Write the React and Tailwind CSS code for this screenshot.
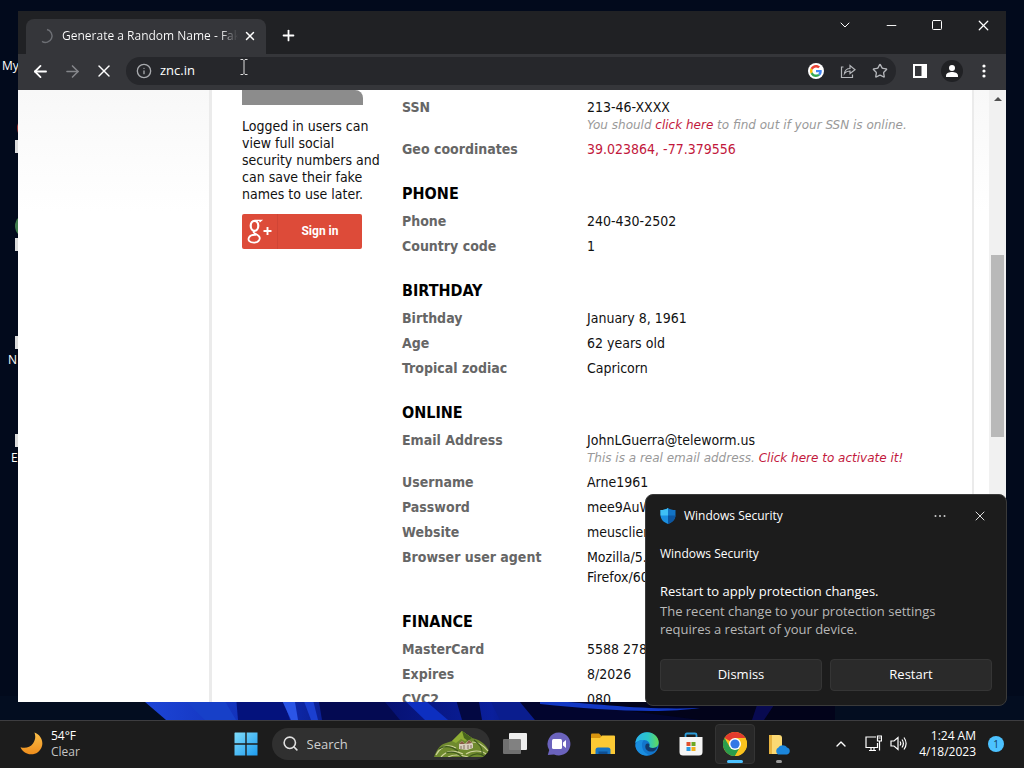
import {
  ArrowLeft,
  ArrowRight,
  ChevronDown,
  ChevronUp,
  Info,
  Minus,
  Plus,
  Search,
  Square,
  Star,
  X,
} from 'lucide-react';

const sections = [
  {
    rows: [
      {
        label: 'SSN',
        value: '213-46-XXXX',
        note: (
          <>
            You should <a href="#ssn" className="text-[#c2183c]">click here</a> to find out if your SSN is online.
          </>
        ),
      },
      { label: 'Geo coordinates', value: <a href="#map" className="text-[#c2183c]">39.023864, -77.379556</a> },
    ],
  },
  {
    title: 'PHONE',
    rows: [
      { label: 'Phone', value: '240-430-2502' },
      { label: 'Country code', value: '1' },
    ],
  },
  {
    title: 'BIRTHDAY',
    rows: [
      { label: 'Birthday', value: 'January 8, 1961' },
      { label: 'Age', value: '62 years old' },
      { label: 'Tropical zodiac', value: 'Capricorn' },
    ],
  },
  {
    title: 'ONLINE',
    rows: [
      {
        label: 'Email Address',
        value: 'JohnLGuerra@teleworm.us',
        note: (
          <>
            This is a real email address. <a href="#activate" className="text-[#c2183c]">Click here to activate it!</a>
          </>
        ),
      },
      { label: 'Username', value: 'Arne1961' },
      { label: 'Password', value: 'mee9AuW' },
      { label: 'Website', value: 'meusclien' },
      { label: 'Browser user agent', value: <>Mozilla/5.0<br />Firefox/60</> },
    ],
  },
  {
    title: 'FINANCE',
    rows: [
      { label: 'MasterCard', value: '5588 278' },
      { label: 'Expires', value: '8/2026' },
      { label: 'CVC2', value: '080' },
    ],
  },
];

function Wallpaper() {
  return (
    <svg className="absolute bottom-0 left-0 w-full h-6" viewBox="0 0 1024 24" preserveAspectRatio="none">
      <defs>
        <linearGradient id="bloom" x1="0" x2="1">
          <stop offset="0" stopColor="#1d46d8" />
          <stop offset="0.3" stopColor="#0f2bb0" />
          <stop offset="0.5" stopColor="#06106e" />
          <stop offset="0.75" stopColor="#0a1f9c" />
          <stop offset="1" stopColor="#02041c" />
        </linearGradient>
      </defs>
      <rect width="1024" height="24" fill="#030d20" />
      <path d="M138 0H835V24H166Z" fill="#02031a" />
      <path d="M138 0H600L610 24H166Z" fill="url(#bloom)" />
      <path d="M180 0L205 24H236L222 0Z" fill="#1740c8" />
      <path d="M236 0L238 24H290L282 0Z" fill="#04127c" />
      <path d="M280 0L291 24H298L294 0Z" fill="#2b55e6" />
      <path d="M302 0L311 24H318L312 0Z" fill="#1b3fd0" />
      <path d="M318 0L322 24H400L380 0Z" fill="#040a52" />
      <path d="M400 0L425 24H448L420 0Z" fill="#0d2fc0" />
      <path d="M455 0L462 24H482L478 0Z" fill="#030842" />
      <path d="M488 0L500 24H535L515 0Z" fill="#0a1d8e" />
      <path d="M515 0L535 24H700L560 6Z" fill="#02052e" />
      <path d="M540 4C600 8 640 14 700 12C660 18 600 14 540 8Z" fill="#1238c4" />
      <path d="M760 0L752 24H764L780 0Z" fill="#080a50" />
    </svg>
  );
}

function GoogleG() {
  return (
    <svg className="size-4" viewBox="0 0 48 48">
      <circle cx="24" cy="24" r="24" fill="#fff" />
      <g transform="translate(6 6) scale(.75)">
        <path fill="#EA4335" d="M24 9.5c3.54 0 6.71 1.22 9.21 3.6l6.85-6.85C35.9 2.38 30.47 0 24 0 14.62 0 6.51 5.38 2.56 13.22l7.98 6.19C12.43 13.72 17.74 9.5 24 9.5z" />
        <path fill="#4285F4" d="M46.98 24.55c0-1.57-.15-3.09-.38-4.55H24v9.02h12.94c-.58 2.96-2.26 5.48-4.78 7.18l7.73 6c4.51-4.18 7.09-10.36 7.09-17.65z" />
        <path fill="#FBBC05" d="M10.53 28.59c-.48-1.45-.76-2.99-.76-4.59s.27-3.14.76-4.59l-7.98-6.19C.92 16.46 0 20.12 0 24c0 3.88.92 7.54 2.56 10.78l7.97-6.19z" />
        <path fill="#34A853" d="M24 48c6.48 0 11.93-2.13 15.89-5.81l-7.73-6c-2.15 1.45-4.92 2.3-8.16 2.3-6.26 0-11.57-4.22-13.47-9.91l-7.98 6.19C6.51 42.62 14.62 48 24 48z" />
      </g>
    </svg>
  );
}

function TabStrip() {
  return (
    <div className="flex h-[43px] shrink-0 items-stretch bg-[#202124]">
      <div className="flex flex-1 items-end pl-2">
        <div className="flex h-[35px] w-60 items-center rounded-t-lg bg-[#35363a] pb-0.5 pl-3 pr-2">
          <svg className="size-4 shrink-0" viewBox="0 0 16 16" fill="none" stroke="#6d6f74" strokeWidth="1.5">
            <path d="M9 1.6A6.5 6.5 0 1 1 4 13.4" />
          </svg>
          <span className="ml-2 w-[176px] shrink-0 overflow-hidden whitespace-nowrap bg-linear-to-r from-white from-90% to-[#35363a] bg-clip-text text-[12px] text-transparent">
            Generate a Random Name - Fake
          </span>
          <button aria-label="Close tab" className="ml-1 flex size-4 items-center justify-center text-white">
            <X size={14} strokeWidth={2.5} />
          </button>
        </div>
        <button aria-label="New tab" className="ml-2 flex h-[35px] w-7 items-center justify-center pb-0.5 text-white">
          <Plus size={17} strokeWidth={2.5} />
        </button>
      </div>
      <div className="flex h-7 text-white">
        <button aria-label="Search tabs" className="flex w-[46px] items-center justify-center"><ChevronDown size={16} strokeWidth={1.5} /></button>
        <button aria-label="Minimize" className="flex w-[46px] items-center justify-center"><Minus size={15} strokeWidth={1.5} /></button>
        <button aria-label="Maximize" className="flex w-[46px] items-center justify-center"><Square size={12} strokeWidth={2} /></button>
        <button aria-label="Close" className="flex w-[46px] items-center justify-center"><X size={17} strokeWidth={1.75} /></button>
      </div>
    </div>
  );
}

function Toolbar() {
  return (
    <div className="flex h-9 shrink-0 items-center bg-[#35363a] px-1.5 pb-0.5 text-white">
      <button aria-label="Back" className="flex w-8 justify-center"><ArrowLeft size={19} strokeWidth={2.25} /></button>
      <button aria-label="Forward" className="flex w-8 justify-center text-[#85868a]"><ArrowRight size={19} strokeWidth={2} /></button>
      <button aria-label="Stop" className="flex w-8 justify-center"><X size={20} strokeWidth={1.75} /></button>
      <div className="ml-1.5 flex h-7 flex-1 items-center rounded-full bg-[#26272b] pl-2.5 pr-2">
        <Info size={16} strokeWidth={2} className="shrink-0 text-[#a8aaae]" />
        <input
          aria-label="Address"
          defaultValue="znc.in"
          className="ml-2 w-full min-w-0 flex-1 bg-transparent text-[13px] text-white outline-none"
        />
        <div className="flex items-center gap-4 text-[#b4b6ba]">
          <button aria-label="Google"><GoogleG /></button>
          <button aria-label="Share">
            <svg className="size-4" viewBox="0 0 16 16" fill="none" stroke="currentColor" strokeWidth="1.2">
              <path d="M3.500 4H1.500V14.500H12.500V11.500" />
              <path d="M4.500 10.500C5 7 7.500 5.500 10 5.500V2.500L15 6.700L10 10.500V8C7.500 8 5.800 8.800 4.500 10.500Z" />
            </svg>
          </button>
          <button aria-label="Bookmark"><Star size={16} strokeWidth={2} /></button>
        </div>
      </div>
      <button aria-label="Side panel" className="ml-2 flex w-8 justify-center">
        <svg className="size-4" viewBox="0 0 16 16">
          <path fill="currentColor" fillRule="evenodd" d="M1 1H15V15H1ZM3 3V13H9.500V3Z" />
        </svg>
      </button>
      <button aria-label="Profile" className="flex w-8 justify-center">
        <svg className="size-[22px]" viewBox="0 0 22 22">
          <circle cx="11" cy="11" r="11" fill="#202124" />
          <circle cx="11" cy="8" r="3" fill="#fff" />
          <path d="M5 17V15.500C5 13 8.500 12 11 12S17 13 17 15.500V17Z" fill="#fff" />
        </svg>
      </button>
      <button aria-label="Menu" className="flex w-8 justify-center">
        <svg className="size-4" viewBox="0 0 16 16" fill="currentColor">
          <circle cx="8" cy="3" r="1.6" />
          <circle cx="8" cy="8" r="1.6" />
          <circle cx="8" cy="13" r="1.6" />
        </svg>
      </button>
    </div>
  );
}

function Sidebar() {
  return (
    <aside className="w-[160px] shrink-0 text-[14px] leading-[17px] text-[#111]">
      <div className="h-[15px] w-[121px] rounded-tr-lg bg-[#8c8c8c]" />
      <p className="mt-[13px] whitespace-nowrap">
        Logged in users can<br />view full social<br />security numbers and<br />can save their fake<br />names to use later.
      </p>
      <button className="mt-[11px] flex h-[35px] w-[120px] items-center rounded-xs bg-[#dd4b39] text-white">
        <span className="flex h-full w-9 items-center justify-center border-r border-[#d04535]">
          <svg className="h-[25px] w-[25px]" viewBox="0 0 25 25" fill="none" stroke="#fff">
            <ellipse cx="7.500" cy="6.800" rx="3.800" ry="5" strokeWidth="2.200" />
            <path d="M8 1.300H14.500L12.500 3" strokeWidth="1.200" />
            <path d="M7.500 12C5 13.500 8.500 14.800 10.500 16C15 18.800 12 23.600 7 23.600C2.500 23.600 .8 21.300 1.800 18.800C2.800 16.500 6 15.600 9 15.800" strokeWidth="1.800" />
            <path d="M20.500 8V16M16.500 12H24.500" strokeWidth="1.900" />
          </svg>
        </span>
        <span className="flex-1 text-center font-[Roboto] text-[12px] font-bold">Sign in</span>
      </button>
    </aside>
  );
}

function Section({ title, rows }) {
  return (
    <section>
      {title && <h3 className="mb-[7px] mt-5 text-[16px] font-bold leading-5 text-black">{title}</h3>}
      <table className="w-full table-fixed text-left">
        <tbody>
          {rows.map((row) => (
            <tr key={row.label} className="align-top">
              <th scope="row" className="w-[185px] pb-[5px] font-bold text-[#666]">{row.label}</th>
              <td className="whitespace-nowrap pb-[5px] text-[#111]">
                {row.value}
                {row.note && (
                  <p className="font-['DejaVu_Sans',sans-serif] text-[12px] italic leading-[17px] text-[#999]">{row.note}</p>
                )}
              </td>
            </tr>
          ))}
        </tbody>
      </table>
    </section>
  );
}

function Page() {
  return (
    <div className="flex min-h-0 flex-1 overflow-hidden bg-white font-['DejaVu_Sans_Condensed','Noto_Sans',sans-serif]">
      <div className="w-[194px] shrink-0 border-r-3 border-[#ebebeb] bg-linear-to-b from-[#f8f8f8] to-white to-20%" />
      <div className="flex min-w-0 flex-1 border-r-2 border-[#ebebeb] pl-[30px]">
        <Sidebar />
        <main className="min-w-0 flex-1 pt-[7px] text-[14px] leading-5">
          {sections.map((s, i) => <Section key={i} {...s} />)}
        </main>
      </div>
      <div className="w-[15px] shrink-0 bg-linear-to-b from-[#f8f8f8] to-white to-20%" />
      <div className="flex w-[17px] shrink-0 flex-col items-center bg-[#f1f1f1] pt-[7px]">
        <svg className="h-1 w-2" viewBox="0 0 8 4"><path d="M0 4L4 0L8 4Z" fill="#505050" /></svg>
        <div className="mt-[154px] h-[182px] w-[13px] bg-[#b9b9b9]" />
      </div>
    </div>
  );
}

function Toast() {
  return (
    <div role="alert" className="absolute bottom-3.5 right-[17px] w-[362px] rounded-lg border border-[#3a3a3a] bg-[#1c1c1c] px-3.5 pb-3.5 pt-[9px] text-white">
      <div className="flex h-6 items-center">
        <svg className="size-4" viewBox="0 0 16 16">
          <path d="M8 0C10 1.500 12.500 2 15.500 2V7C15.500 11.500 12 14.500 8 16Z" fill="#1273c4" />
          <path d="M8 0C6 1.500 3.500 2 .5 2V7C.5 11.500 4 14.500 8 16Z" fill="#1b8fe0" />
          <path d="M8 0C6 1.500 3.500 2 .5 2V7.500H8Z" fill="#3fc0f5" />
          <path d="M8 7.500H15.500C15.300 11.700 12 14.500 8 16Z" fill="#0d56a0" />
        </svg>
        <span className="ml-2 flex-1 text-[12px]">Windows Security</span>
        <button aria-label="More options" className="flex w-10 justify-center">
          <svg className="h-1 w-3" viewBox="0 0 12 4" fill="#ccc"><circle cx="1.500" cy="2" r="1" /><circle cx="6" cy="2" r="1" /><circle cx="10.500" cy="2" r="1" /></svg>
        </button>
        <button aria-label="Close notification" className="-mr-2 flex w-10 justify-center text-[#ddd]"><X size={16} strokeWidth={1.5} /></button>
      </div>
      <p className="mt-4 text-[12px] leading-5">Windows Security</p>
      <p className="mt-[18px] text-[13px] leading-[18px]">Restart to apply protection changes.</p>
      <p className="mt-0.5 w-[300px] text-[13px] leading-[18px] text-[#b8b8b8]">
        The recent change to your protection settings requires a restart of your device.
      </p>
      <div className="mt-[21px] grid grid-cols-2 gap-2">
        <button className="h-8 rounded-sm border border-[#353535] bg-[#2a2a2a] text-[13px]">Dismiss</button>
        <button className="h-8 rounded-sm border border-[#353535] bg-[#2a2a2a] text-[13px]">Restart</button>
      </div>
    </div>
  );
}

function StartIcon() {
  return (
    <svg className="size-6" viewBox="0 0 24 24">
      <defs>
        <linearGradient id="win" x1="0" y1="0" x2="1" y2="1">
          <stop offset="0" stopColor="#7fdcfb" />
          <stop offset="1" stopColor="#1d9cf0" />
        </linearGradient>
      </defs>
      <path fill="url(#win)" d="M1 .5H11.300V11.300H.5V1ZM12.700 .5H23.500V11.300H12.700ZM.5 12.700H11.300V23.500H.5ZM12.700 12.700H23.500V23.500H12.700Z" />
    </svg>
  );
}

function Hills() {
  return (
    <svg className="h-[27px] w-14" viewBox="0 0 56 27">
      <path d="M0 27C2 21 6 14 12 13L18 11L28 1L38 8C43 9 47 11 50 14C53 17 55 20 55 22L49 27Z" fill="#6f8a2e" />
      <path d="M28 1L18 11L22 13L27 9L31 11L38 8Z" fill="#8fae34" />
      <path d="M28 1L30 8L34 11L38 8Z" fill="#47651c" />
      <path d="M2 25C7 16 14 14 22 18M7 27C13 20 22 20 29 24M38 12C44 12 50 16 54 21M32 24C38 20 47 20 52 24M14 27C20 24 28 25 34 27" fill="none" stroke="#cdd29a" strokeWidth="1.200" />
      <path d="M5 19C11 15 17 16 24 21M12 23C18 21 24 23 28 27M40 10C46 15 49 18 48 25M35 27C40 23 46 23 50 26" fill="none" stroke="#3f5a1c" strokeWidth="1.200" />
      <path d="M25 14L28 11L31 14L35 10L39 14V18L33 20L25 19Z" fill="#d9d0bd" />
      <path d="M25 14L28 11L31 14ZM32 14L35 10L38 13Z" fill="#8a5a45" />
      <path d="M27 16V19M30 15V19M34 15V19M37 15V18" stroke="#7a6658" strokeWidth=".9" />
    </svg>
  );
}

function TaskViewIcon() {
  return (
    <svg className="size-6" viewBox="0 0 24 24">
      <rect x="6" y="1" width="18" height="17" rx="1" fill="#ededed" />
      <rect x="0" y="7" width="18" height="15" rx="1" fill="#777" fillOpacity=".92" />
    </svg>
  );
}

function ChatIcon() {
  return (
    <svg className="size-6" viewBox="0 0 24 24">
      <path d="M12 .5A11.500 11.500 0 1 1 7 22.400L.8 23L2.200 18A11.500 11.500 0 0 1 12 .5Z" fill="#6b63bd" />
      <rect x="5" y="7" width="10" height="10" rx="1.500" fill="#fff" />
      <path d="M16 10.500L19 8V16L16 13.500Z" fill="#fff" />
    </svg>
  );
}

function FolderIcon() {
  return (
    <svg className="size-6" viewBox="0 0 24 24">
      <path d="M0 2.500Q0 1.500 1 1.500H8L10.500 4V8H0Z" fill="#d8940f" />
      <path d="M0 6H9L11 3.500H23Q24 3.500 24 4.500V22H0Z" fill="#fcc934" />
      <path d="M4.500 22V18Q4.500 15.500 7 15.500H17Q19.500 15.500 19.500 18V22Z" fill="#1673c2" />
      <path d="M7.500 22V19.500H16.500V22Z" fill="#0e4f93" />
    </svg>
  );
}

function EdgeIcon() {
  return (
    <svg className="size-6" viewBox="0 0 24 24">
      <defs>
        <linearGradient id="edgeTop" x1="0" x2="1">
          <stop offset="0" stopColor="#2bb3ec" />
          <stop offset="0.55" stopColor="#2bc6c6" />
          <stop offset="1" stopColor="#63d957" />
        </linearGradient>
      </defs>
      <circle cx="12" cy="12" r="11.700" fill="#1276cc" />
      <path d="M.4 11C1.200 4.500 6 .3 12 .3C18.500 .3 23.700 5 23.700 10.300C23.700 14 21 16 17.500 16C14.500 16 13.500 14.700 14.500 13.300C15.500 11.500 13 8 9 8C5 8 1.500 9.500 .4 11Z" fill="url(#edgeTop)" />
      <path d="M9 8C5.500 10.500 6 20 14 23C9 24.700 2 21.500 .6 15C-.2 10 4.500 7.500 9 8Z" fill="#1a8ee0" />
      <path d="M14.500 13.300C13.500 14.700 14.500 16 17.500 16C19.500 16 21 15.600 22.300 14.700C21 19 18 20 15 19.500C11 19 9.500 15.500 10.700 12.500C12 11 14.500 11.500 14.500 13.300Z" fill="#123a6b" />
    </svg>
  );
}

function StoreIcon() {
  return (
    <svg className="size-6" viewBox="0 0 24 24">
      <path d="M6.500 6V3Q6.500 1.500 8 1.500H16Q17.500 1.500 17.500 3V6" fill="none" stroke="#2b9bd8" strokeWidth="1.800" />
      <path d="M.5 5H23.500V20Q23.500 23.500 20 23.500H4Q.5 23.500 .5 20Z" fill="#f5f5f5" />
      <rect x="7.500" y="10" width="4" height="4" fill="#e0502c" />
      <rect x="12.500" y="10" width="4" height="4" fill="#6ca824" />
      <rect x="7.500" y="15" width="4" height="4" fill="#2a9ae0" />
      <rect x="12.500" y="15" width="4" height="4" fill="#f2b01c" />
    </svg>
  );
}

function ChromeIcon() {
  return (
    <svg className="size-6" viewBox="0 0 24 24">
      <circle cx="12" cy="12" r="12" fill="#fcc31e" />
      <path d="M12 12L1.600 6A12 12 0 0 1 22.400 6H12Z" fill="#e33b2e" />
      <path d="M1.600 6A12 12 0 0 0 12 24L17.200 15L12 12L6.800 15Z" fill="#2a9c4c" />
      <path d="M12 6H22.400A12 12 0 0 1 12 24L17.200 15Z" fill="#fcc31e" />
      <circle cx="12" cy="12" r="6" fill="#fff" />
      <circle cx="12" cy="12" r="4.600" fill="#3377e6" />
    </svg>
  );
}

function CloudFolderIcon() {
  return (
    <svg className="size-6" viewBox="0 0 24 24">
      <path d="M2 3H12Q15 3 15 6V22H2Z" fill="#fbd974" />
      <path d="M2 3H5V22H2Z" fill="#e8b440" />
      <path d="M11 22.500A4 4 0 0 1 11.500 15.500A5 5 0 0 1 20 15.500A3.600 3.600 0 0 1 20 22.500Z" fill="#1b86dc" />
    </svg>
  );
}

const apps = [
  { name: 'Task View', icon: <TaskViewIcon /> },
  { name: 'Chat', icon: <ChatIcon /> },
  { name: 'File Explorer', icon: <FolderIcon /> },
  { name: 'Microsoft Edge', icon: <EdgeIcon /> },
  { name: 'Microsoft Store', icon: <StoreIcon /> },
  { name: 'Google Chrome', icon: <ChromeIcon />, state: 'active' },
  { name: 'OneDrive setup', icon: <CloudFolderIcon />, state: 'running' },
];

function Taskbar() {
  return (
    <footer className="grid h-12 shrink-0 grid-cols-[1fr_auto_1fr] items-center border-t border-[#3d3d40] bg-[#1c1c1c] pb-0.5 text-[12px] leading-4 text-white">
      <div className="flex items-center gap-2 pl-5">
        <svg className="size-[23px]" viewBox="0 0 23 23">
          <defs>
            <linearGradient id="moon" x1="0" y1="0" x2="0" y2="1">
              <stop offset="0" stopColor="#fbc04a" />
              <stop offset="1" stopColor="#ef8d1c" />
            </linearGradient>
          </defs>
          <path d="M14.500 .5C20 2.500 23.500 8 22 14C20 21 13 24 7 21.500C4 20.200 1.500 18 .5 15.200C5 16.500 10 15.700 13 11.500C15.500 8 15.800 4.500 14.500 .5Z" fill="url(#moon)" />
        </svg>
        <div>
          <p>54°F</p>
          <p className="text-[#c4c4c4]">Clear</p>
        </div>
      </div>

      <div className="flex items-center">
        <button aria-label="Start" className="flex w-11 justify-center"><StartIcon /></button>
        <label className="ml-1 mr-[3px] flex h-8 w-[218px] items-center overflow-hidden rounded-full bg-[#303030] pl-2.5">
          <Search size={17} strokeWidth={2.25} className="shrink-0 text-[#e0e0e0]" />
          <input
            aria-label="Search"
            placeholder="Search"
            className="ml-2 w-0 min-w-0 flex-1 bg-transparent text-[13px] outline-none placeholder:text-[#cfcfcf]"
          />
          <Hills />
        </label>
        {apps.map((app) => (
          <button key={app.name} aria-label={app.name} className="relative flex h-11 w-11 items-center justify-center">
            {app.state === 'active' && <span className="absolute inset-x-0.5 inset-y-0.5 rounded-sm border border-[#343434] bg-[#282828]" />}
            <span className="relative">{app.icon}</span>
            {app.state === 'active' && <span className="absolute bottom-[3px] h-[3px] w-4 rounded-full bg-[#4cc2ff]" />}
            {app.state === 'running' && <span className="absolute bottom-[3px] h-[3px] w-1.5 rounded-full bg-[#9a9a9a]" />}
          </button>
        ))}
      </div>

      <div className="flex items-center justify-end pr-5">
        <button aria-label="Hidden icons"><ChevronUp size={16} strokeWidth={2} /></button>
        <button className="ml-4 flex gap-2" aria-label="Network and volume">
          <svg className="size-[17px]" viewBox="0 0 17 17" fill="none" stroke="#fff" strokeWidth="1.200">
            <path d="M11 2H1V12.500H12.500V8M4 15.500H11M6 12.500V15.500M9 12.500V15.500M14.500 6V15.500" />
            <path d="M12.500 1H16.500V6H12.500ZM13.500 3H15.500" />
          </svg>
          <svg className="size-[17px]" viewBox="0 0 17 17" fill="none" stroke="#fff" strokeWidth="1.200">
            <path d="M1 6V11H4L8 14.500V2.500L4 6Z" />
            <path d="M10 6.500Q11.500 8.500 10 10.500M12 4.500Q14.800 8.500 12 12.500M14 2.500Q18.200 8.500 14 14.500" />
          </svg>
        </button>
        <div className="ml-3 text-right">
          <p>1:24 AM</p>
          <p>4/18/2023</p>
        </div>
        <span className="ml-3 flex size-4 items-center justify-center rounded-full bg-[#4cc2ff] text-[10px] text-[#10405c]">1</span>
      </div>
    </footer>
  );
}

export default function App() {
  return (
    <div className="flex h-screen flex-col overflow-hidden bg-[#020a1c] font-['Open_Sans','Noto_Sans',sans-serif]">
      <div className="relative min-h-0 flex-1">
        <Wallpaper />

        {/* Desktop shortcuts, mostly behind the browser window */}
        <div className="absolute left-0 top-0 text-[12px] leading-4 text-white">
          <span className="absolute left-0.5 top-[58px]">My</span>
          <span className="absolute left-[17px] top-[116px] size-6 rounded-full bg-[#a03030]" />
          <span className="absolute left-[15px] top-[140px] h-[13px] w-3 bg-[#dcdcdc]" />
          <span className="absolute left-[15px] top-[214px] size-6 rounded-full bg-[#3f7a4c]" />
          <span className="absolute left-[15px] top-[238px] h-[13px] w-3 bg-[#dcdcdc]" />
          <span className="absolute left-[15px] top-[336px] h-[13px] w-3 bg-[#dcdcdc]" />
          <span className="absolute left-2 top-[352px]">N</span>
          <span className="absolute left-[15px] top-[434px] h-[13px] w-3 bg-[#dcdcdc]" />
          <span className="absolute left-[11px] top-[450px]">E</span>
        </div>

        <div className="absolute bottom-[18px] left-[18px] right-[18px] top-[11px] flex flex-col overflow-hidden">
          <TabStrip />
          <Toolbar />
          <Page />
        </div>

        {/* Text cursor */}
        <svg className="absolute left-[240px] top-[59px] h-4 w-2" viewBox="0 0 8 16" fill="none" stroke="#ddd">
          <path d="M.5 .5H3L4 1.500L5 .5H7.500M4 1.500V14.500M.5 15.500H3L4 14.500L5 15.500H7.500" />
        </svg>

        <Toast />
      </div>

      <Taskbar />
    </div>
  );
}
